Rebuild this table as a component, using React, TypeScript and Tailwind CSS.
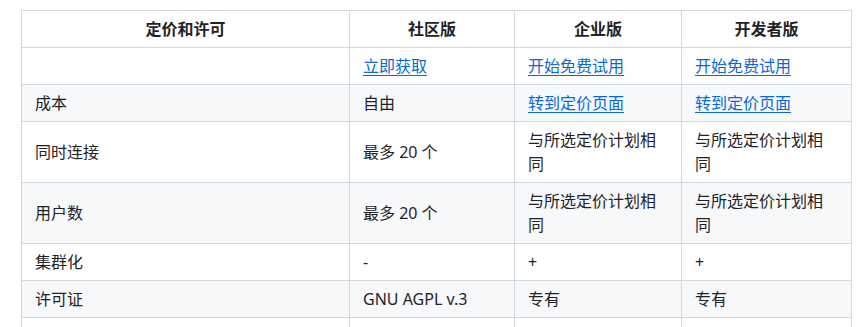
import React from "react";

const font = { fontFamily: '"Noto Sans", "Noto Sans CJK SC", sans-serif' };

type Cell = { text: string; link?: boolean };

const rows: Cell[][] = [
  [{ text: "" }, { text: "立即获取", link: true }, { text: "开始免费试用", link: true }, { text: "开始免费试用", link: true }],
  [{ text: "成本" }, { text: "自由" }, { text: "转到定价页面", link: true }, { text: "转到定价页面", link: true }],
  [{ text: "同时连接" }, { text: "最多 20 个" }, { text: "与所选定价计划相同" }, { text: "与所选定价计划相同" }],
  [{ text: "用户数" }, { text: "最多 20 个" }, { text: "与所选定价计划相同" }, { text: "与所选定价计划相同" }],
  [{ text: "集群化" }, { text: "-" }, { text: "+" }, { text: "+" }],
  [{ text: "许可证" }, { text: "GNU AGPL v.3" }, { text: "专有" }, { text: "专有" }],
  [{ text: "\u00a0" }, { text: "" }, { text: "" }, { text: "" }],
];

export default function App() {
  return (
    <div className="bg-white w-[856px] h-[327px] overflow-hidden pt-[10px] pl-[21px]" style={font}>
      <table className="table-fixed border-collapse w-[830px] text-[16px] leading-[24px] text-[#1f2328]">
        <colgroup>
          <col className="w-[328px]" />
          <col className="w-[165px]" />
          <col className="w-[167px]" />
          <col className="w-[170px]" />
        </colgroup>
        <thead>
          <tr className="bg-white">
            {["定价和许可", "社区版", "企业版", "开发者版"].map((h, i) => (
              <th key={i} className="border border-[#d1d9e0] px-[13px] py-[6px] font-bold text-center">
                {h}
              </th>
            ))}
          </tr>
        </thead>
        <tbody>
          {rows.map((r, ri) => (
            <tr key={ri} className={ri % 2 === 1 ? "bg-[#f6f8fa]" : "bg-white"}>
              {r.map((c, ci) => (
                <td key={ci} className="border border-[#d1d9e0] px-[13px] py-[6px] align-middle">
                  {c.link ? (
                    <a href="#" className="text-[#0969da] underline underline-offset-[3px]">
                      {c.text}
                    </a>
                  ) : (
                    c.text
                  )}
                </td>
              ))}
            </tr>
          ))}
        </tbody>
      </table>
    </div>
  );
}
